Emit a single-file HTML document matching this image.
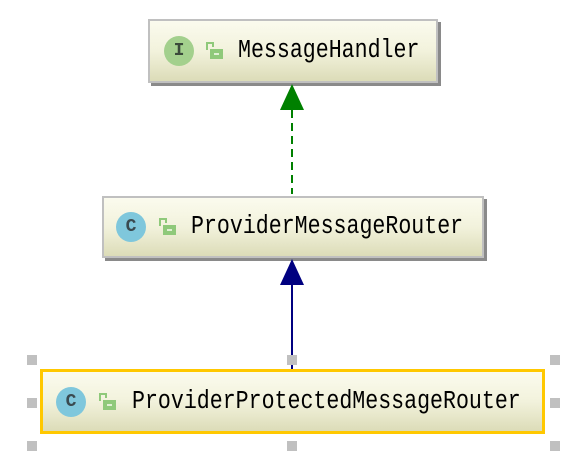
<!DOCTYPE html><html><head><style>
body{margin:0;width:582px;height:476px;background:#fff;position:relative;overflow:hidden;font-family:"Liberation Mono",monospace}
.b{position:absolute;box-sizing:border-box;border:2px solid #c0c0c0;background:linear-gradient(#fbfbee,#f2f2dc 50%,#dcdcb8);box-shadow:3px 3px 0 #8a8a8a}
.t{position:absolute;font-size:21.6px;color:#000;top:50%;transform:translateY(-50%) scaleY(1.2);white-space:nowrap;left:87px}
.ic{position:absolute;top:50%;margin-top:-15px;left:12px;width:30px;height:30px;border-radius:50%;font:bold 18px "Liberation Mono",monospace;color:#3a4a50;text-align:center;line-height:30px}
.lk{position:absolute;left:54px;top:50%;margin-top:-10px}
.h{position:absolute;width:10px;height:10px;background:#c0c0c0}
</style></head><body>
<div class="b" style="left:148px;top:19px;width:290px;height:64px">
<div class="ic" style="left:14px;background:#a3d08d;color:#3a4a3a">I</div>
<svg class="lk" style="left:55px" width="20" height="20"><path d="M2 9V2h6v4" fill="none" stroke="#8fc97a" stroke-width="2"/><rect x="5" y="8" width="13" height="10" fill="#8fc97a"/><rect x="9" y="12" width="5" height="2" fill="#e0f0d4"/></svg>
<div class="t" style="left:88px">MessageHandler</div></div>
<div class="b" style="left:102px;top:196px;width:382px;height:62px">
<div class="ic" style="background:#7fc7dc">C</div>
<svg class="lk" width="20" height="20"><path d="M2 9V2h6v4" fill="none" stroke="#8fc97a" stroke-width="2"/><rect x="5" y="8" width="13" height="10" fill="#8fc97a"/><rect x="9" y="12" width="5" height="2" fill="#e0f0d4"/></svg>
<div class="t">ProviderMessageRouter</div></div>
<div class="b" style="left:40px;top:369px;width:505px;height:65px;border:3px solid #ffc800;box-shadow:none">
<div class="ic" style="left:13px;background:#7fc7dc">C</div>
<svg class="lk" style="left:55px" width="20" height="20"><path d="M2 9V2h6v4" fill="none" stroke="#8fc97a" stroke-width="2"/><rect x="5" y="8" width="13" height="10" fill="#8fc97a"/><rect x="9" y="12" width="5" height="2" fill="#e0f0d4"/></svg>
<div class="t" style="left:89px">ProviderProtectedMessageRouter</div></div>
<svg style="position:absolute;left:0;top:0" width="582" height="476">
<line x1="292" y1="110" x2="292" y2="194" stroke="#008000" stroke-width="2" stroke-dasharray="8,5"/>
<polygon points="292,84 280,110 304,110" fill="#008000"/>
<line x1="292" y1="284" x2="292" y2="369" stroke="#000080" stroke-width="2"/>
<polygon points="292,259 280,285 304,285" fill="#000080"/>
</svg>
<div class="h" style="left:27px;top:355px"></div><div class="h" style="left:287px;top:355px"></div><div class="h" style="left:550px;top:355px"></div>
<div class="h" style="left:27px;top:398px"></div><div class="h" style="left:550px;top:398px"></div>
<div class="h" style="left:27px;top:441px"></div><div class="h" style="left:287px;top:441px"></div><div class="h" style="left:550px;top:441px"></div>
</body></html>
